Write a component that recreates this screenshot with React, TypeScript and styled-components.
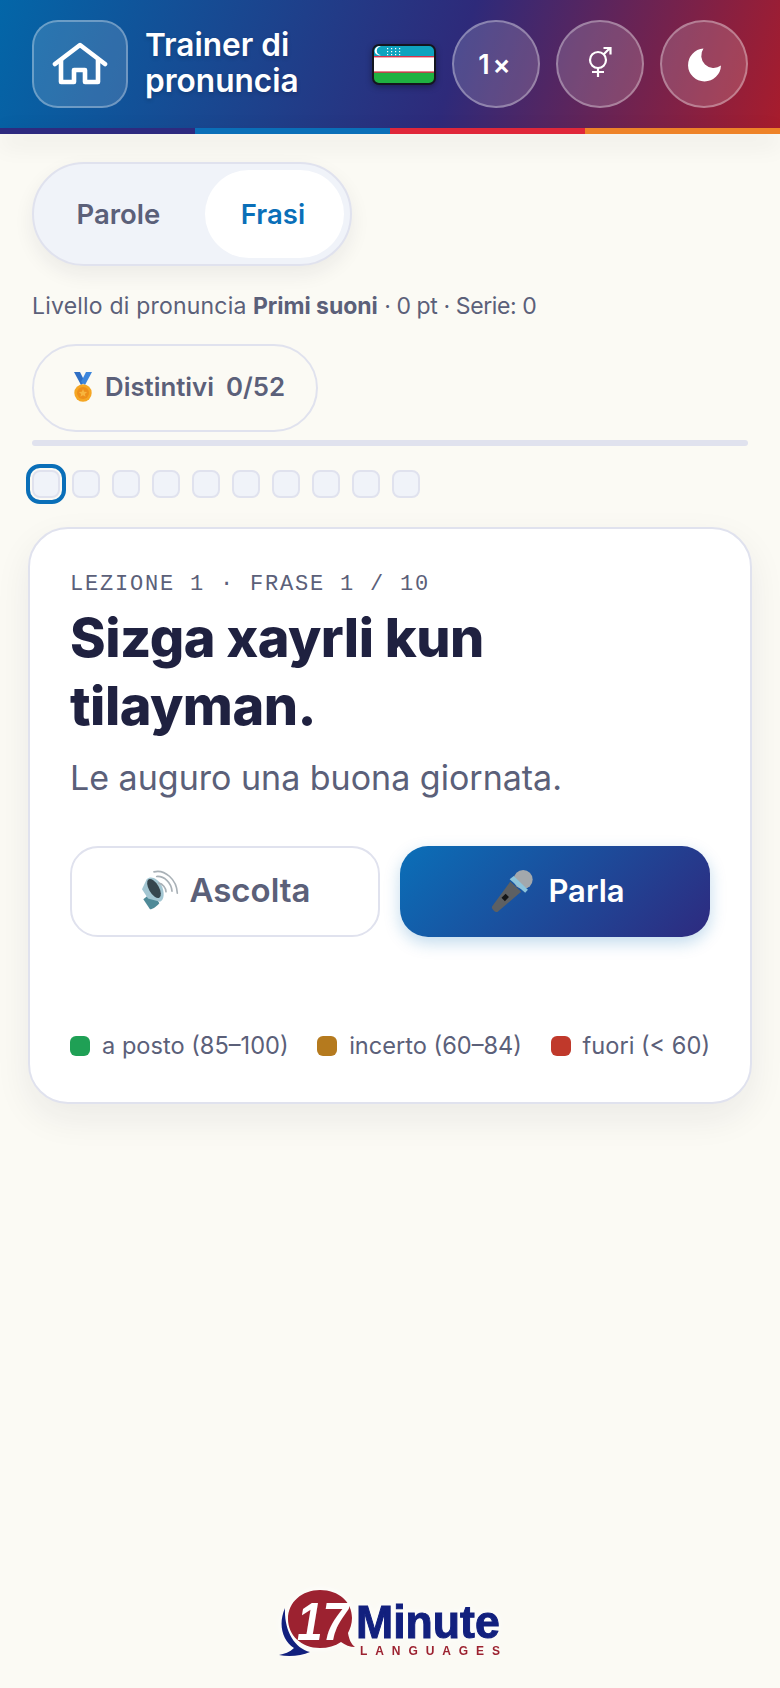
import React from 'react';
import styled, { createGlobalStyle } from 'styled-components';

const GlobalStyle = createGlobalStyle`
  html, body {
    margin: 0;
    padding: 0;
    background: #fbfaf4;
    font-family: Inter, "Noto Sans", sans-serif;
  }
  * { box-sizing: border-box; }
`;

const Page = styled.div`
  width: 780px;
  height: 1688px;
  display: flex;
  flex-direction: column;
  background: #fbfaf4;
  overflow: hidden;
`;

const TopBar = styled.header`
  height: 128px;
  padding: 0 32px;
  display: flex;
  align-items: center;
  background: linear-gradient(108deg, #0366a8 0%, #2e2a7a 58%, #a81c2c 100%);
`;

const HomeButton = styled.button`
  width: 96px;
  height: 88px;
  flex-shrink: 0;
  display: flex;
  align-items: center;
  justify-content: center;
  padding: 0;
  border-radius: 26px;
  border: 2px solid rgba(255, 255, 255, 0.3);
  background: rgba(255, 255, 255, 0.14);
`;

const Title = styled.h1`
  margin: -2px 0 0 17px;
  flex: 1;
  font-size: 31.6px;
  line-height: 36px;
  font-weight: 600;
  color: #fff;
  text-shadow: 0 2px 4px rgba(0, 0, 0, 0.2);
`;

const FlagWrap = styled.span`
  display: flex;
  margin-right: 16px;
  filter: drop-shadow(0 2px 3px rgba(0, 0, 0, 0.35));
`;

const RoundButton = styled.button`
  width: 88px;
  height: 88px;
  flex-shrink: 0;
  display: flex;
  align-items: center;
  justify-content: center;
  padding: 0;
  border-radius: 50%;
  border: 2px solid rgba(255, 255, 255, 0.32);
  background: rgba(255, 255, 255, 0.16);
  color: #fff;
  font-family: inherit;
  font-size: 27px;
  font-weight: 600;
  letter-spacing: 3px;
  & + & { margin-left: 16px; }
`;

const Strip = styled.div`
  height: 6px;
  display: grid;
  grid-template-columns: repeat(4, 1fr);
  box-shadow: 0 8px 24px rgba(20, 20, 30, 0.14);
`;

const StripPart = styled.span<{ $color: string }>`
  background: ${(p) => p.$color};
`;

const Content = styled.main`
  flex: 1;
  padding: 28px 32px 0;
  display: flex;
  flex-direction: column;
  align-items: flex-start;
`;

const Toggle = styled.div`
  display: inline-flex;
  gap: 8px;
  padding: 6px;
  border-radius: 999px;
  border: 2px solid #e0e2ee;
  background: #f0f3f9;
  box-shadow: 0 8px 20px rgba(30, 30, 60, 0.07);
`;

const ToggleOption = styled.button<{ $active?: boolean }>`
  height: 88px;
  padding: ${(p) => (p.$active ? '0 39px 0 36px' : '0 36.500px')};
  border: 0;
  border-radius: 999px;
  font-family: inherit;
  font-size: 27.5px;
  font-weight: 600;
  color: ${(p) => (p.$active ? '#0a6fb8' : '#5b6079')};
  background: ${(p) => (p.$active ? '#fff' : 'transparent')};
`;

const LevelLine = styled.p`
  margin: 22px 0 0;
  font-size: 23px;
  line-height: 36px;
  color: #5b6079;
  b { font-weight: 700; letter-spacing: -0.05px; }
`;

const LevelLabel = styled.span`
  letter-spacing: 0.2px;
`;

const LevelStats = styled.span`
  letter-spacing: -0.4px;
`;

const BadgePill = styled.button`
  margin-top: 20px;
  width: 286px;
  height: 88px;
  display: flex;
  align-items: center;
  gap: 12px;
  padding: 0 0 3px 39px;
  border-radius: 999px;
  border: 2px solid #e0e2ee;
  background: transparent;
  color: #5b6079;
  font-family: inherit;
  font-size: 25.8px;
  font-weight: 600;
`;

const ProgressBar = styled.div`
  margin-top: 8px;
  width: 100%;
  height: 6px;
  border-radius: 3px;
  background: #e0e2ee;
`;

const Dots = styled.div`
  margin-top: 24px;
  display: flex;
  gap: 12px;
`;

const Dot = styled.span<{ $current?: boolean }>`
  width: 28px;
  height: 28px;
  border-radius: 8px;
  border: 2px solid #e0e2ee;
  background: #f0f3f9;
  ${(p) => p.$current && 'outline: 4px solid #0a6fb8; outline-offset: 2px;'}
`;

const Card = styled.section`
  margin: 29px -4px 0;
  align-self: stretch;
  height: 577px;
  padding: 42px 40px 0;
  border-radius: 40px;
  border: 2px solid #e0e2ee;
  background: #fff;
  box-shadow: 0 14px 36px rgba(30, 30, 60, 0.07);
`;

const Eyebrow = styled.div`
  font-family: "Liberation Mono", monospace;
  font-size: 22px;
  letter-spacing: 1.8px;
  line-height: 28px;
  color: #5b6079;
`;

const Phrase = styled.h2`
  margin: 5px 0 0;
  font-size: 54px;
  line-height: 68px;
  font-weight: 800;
  letter-spacing: -0.5px;
  color: #1f2140;
`;

const Translation = styled.p`
  margin: 16px 0 0;
  font-size: 34px;
  line-height: 44px;
  color: #5b6079;
`;

const Actions = styled.div`
  margin-top: 46px;
  display: grid;
  grid-template-columns: 1fr 1fr;
  gap: 20px;
`;

const ActionButton = styled.button<{ $primary?: boolean }>`
  height: 91px;
  display: flex;
  align-items: center;
  justify-content: center;
  gap: ${(p) => (p.$primary ? '14px' : '5px')};
  padding: ${(p) => (p.$primary ? '0 0 2px 5px' : '0 0 3px')};
  border-radius: 28px;
  font-family: inherit;
  font-size: ${(p) => (p.$primary ? '31px' : '33px')};
  font-weight: 600;
  color: ${(p) => (p.$primary ? '#fff' : '#5b6079')};
  border: ${(p) => (p.$primary ? '0' : '2px solid #e0e2ee')};
  background: ${(p) => (p.$primary ? 'linear-gradient(135deg, #0a6fb8, #2e2a7f)' : '#fff')};
  box-shadow: ${(p) => (p.$primary ? '0 6px 16px rgba(10, 111, 184, 0.25)' : 'none')};
`;

const Legend = styled.div`
  margin-top: 95px;
  display: flex;
  justify-content: space-between;
`;

const LegendItem = styled.span`
  display: flex;
  align-items: center;
  gap: 12px;
  font-size: 23.6px;
  line-height: 28px;
  color: #5b6079;
`;

const LegendSwatch = styled.i<{ $color: string }>`
  width: 20px;
  height: 20px;
  border-radius: 6px;
  background: ${(p) => p.$color};
`;

const Footer = styled.footer`
  margin-top: auto;
  align-self: stretch;
  padding-bottom: 26px;
  display: flex;
  justify-content: center;
  filter: drop-shadow(0 0 4px #fff);
`;

const HomeIcon = () => (
  <svg width="56" height="46" viewBox="0 0 56 46" fill="none" stroke="#fff" strokeWidth="4.6" strokeLinejoin="round" strokeLinecap="round">
    <path d="M3 23 28 4l25 19" />
    <path d="M9 19v22h13V29h11v12h13V19" />
  </svg>
);

const UzFlag = () => (
  <svg width="64" height="41" viewBox="0 0 64 41">
    <defs>
      <clipPath id="flag-clip">
        <rect x="1" y="1" width="62" height="39" rx="6" />
      </clipPath>
    </defs>
    <g clipPath="url(#flag-clip)">
      <rect width="64" height="13" fill="#0fa3bf" />
      <rect y="13" width="64" height="15" fill="#fff" />
      <rect y="28" width="64" height="13" fill="#1fb141" />
      <rect y="12" width="64" height="1.4" fill="#d8324a" />
      <rect y="27.4" width="64" height="1.4" fill="#d8324a" />
      <path d="M9 2.500a4.600 4.600 0 1 0 0 8.500 4 4 0 1 1 0-8.500z" fill="#fff" />
      {[15, 19, 23, 27].map((x) =>
        [4, 7, 10].map((y) => <rect key={`${x}-${y}`} x={x} y={y} width="1.2" height="1.2" fill="#fff" />),
      )}
    </g>
    <rect x="1" y="1" width="62" height="39" rx="6" fill="none" stroke="#14161f" strokeWidth="2" />
  </svg>
);

const GenderIcon = () => (
  <svg width="36" height="38" viewBox="0 0 36 38" fill="none" stroke="#fff" strokeWidth="2.2">
    <circle cx="16" cy="15" r="8" />
    <path d="M16 23v9M10 27h12M21.500 9.500 28 3M21.500 3H28.500V9.500" />
  </svg>
);

const MoonIcon = () => (
  <svg width="35" height="35" viewBox="0 0 34 34">
    <path d="M16 1.500A16 16 0 1 0 33 18 12 12 0 0 1 16 1.500z" fill="#fff" />
  </svg>
);

const MedalIcon = () => (
  <svg width="20" height="30" viewBox="0 0 20 30">
    <path d="M1 0h6l5 10-4 3z" fill="#2f6fc4" />
    <path d="M19 0h-6l-5 10 4 3z" fill="#3d86dc" />
    <circle cx="10" cy="21" r="8.700" fill="#f5a623" />
    <circle cx="10" cy="21" r="6" fill="#ee8f1a" />
    <path d="m10 17 1.200 2.700 2.900.3-2.200 1.900.7 2.900-2.600-1.500-2.600 1.500.7-2.900L5.900 20l2.900-.3z" fill="#f7b53e" />
  </svg>
);

// Loudspeaker, drawn on a 180-unit grid
const SpeakerIcon = () => (
  <svg width="45" height="42" viewBox="35 30 135 125" fill="none">
    <path d="M48 120 68 150c8 0 20-8 28-18l-20-34z" fill="#4f8a98" />
    <path d="M44 90 58 60c14-12 34 0 44 18s10 44-4 50L62 118z" fill="#a3c6d2" />
    <ellipse cx="80" cy="88" rx="15" ry="32" transform="rotate(-30 80 88)" fill="#36464e" />
    <path d="M94 72c12 2 22 14 22 26M88 52c22-2 44 18 46 44M80 38c32-8 68 22 70 64" stroke="#a9b1b7" strokeWidth="5" strokeLinecap="round" />
  </svg>
);

// Hand microphone, same grid as the loudspeaker
const MicIcon = () => (
  <svg width="44" height="44" viewBox="30 25 130 130">
    <path d="M90 62 122 92 52 152c-6 2-18-8-16-16z" fill="#5d6063" />
    <circle cx="128" cy="56" r="28" fill="#a3a8ac" />
    <path d="M104 38 146 78l-8 9-46-40z" fill="#8cc4dc" transform="translate(-4 8)" />
    <path d="m76 98 10 10-12 12-10-10z" fill="#141618" />
  </svg>
);

const Logo = () => (
  <svg width="230" height="80" viewBox="-3 0 230 80">
    <path d="M7 26C0 42 4 58 16 66c-4 4-10 6-15 7 10 2 22 1 31-3C16 66 6 48 7 26z" fill="#12207e" />
    <path d="M42 8c19 0 32 12 32 28 0 6-2 11-4 15 1 6 3 11 7 14-5 0-10-2-14-5-6 4-13 6-21 6C23 66 10 53 10 37 10 20 24 8 42 8z" fill="#9c2230" />
    <text x="19" y="58" fill="#fff" fontFamily="Liberation Sans, sans-serif" fontSize="53" fontWeight="700" fontStyle="italic" textLength="51" lengthAdjust="spacingAndGlyphs">17</text>
    <text transform="translate(78 56) scale(.97 1)" fill="#12207e" fontFamily="Liberation Sans, sans-serif" fontSize="46" fontWeight="700" stroke="#12207e" strokeWidth="1">Minute</text>
    <text x="82" y="73" fill="#9c2230" fontFamily="Liberation Sans, sans-serif" fontSize="12" fontWeight="700" textLength="140">LANGUAGES</text>
  </svg>
);

const stripColors = ['#2e2a7f', '#0a6fb8', '#e0273a', '#ee8328'];

const App: React.FC = () => {
  return (
    <Page>
      <GlobalStyle />
      <TopBar>
        <HomeButton aria-label="Home">
          <HomeIcon />
        </HomeButton>
        <Title>
          Trainer di
          <br />
          pronuncia
        </Title>
        <FlagWrap>
          <UzFlag />
        </FlagWrap>
        <RoundButton>1×</RoundButton>
        <RoundButton aria-label="Voce">
          <GenderIcon />
        </RoundButton>
        <RoundButton aria-label="Tema">
          <MoonIcon />
        </RoundButton>
      </TopBar>
      <Strip>
        {stripColors.map((c) => (
          <StripPart key={c} $color={c} />
        ))}
      </Strip>
      <Content>
        <Toggle>
          <ToggleOption>Parole</ToggleOption>
          <ToggleOption $active>Frasi</ToggleOption>
        </Toggle>
        <LevelLine>
          <LevelLabel>Livello di pronuncia</LevelLabel> <b>Primi suoni</b>{' '}
          <LevelStats>· 0 pt · Serie: 0</LevelStats>
        </LevelLine>
        <BadgePill>
          <MedalIcon />
          <span>Distintivi</span>
          <span>0/52</span>
        </BadgePill>
        <ProgressBar />
        <Dots>
          {Array.from({ length: 10 }, (_, i) => (
            <Dot key={i} $current={i === 0} />
          ))}
        </Dots>
        <Card>
          <Eyebrow>LEZIONE 1 · FRASE 1 / 10</Eyebrow>
          <Phrase>Sizga xayrli kun tilayman.</Phrase>
          <Translation>Le auguro una buona giornata.</Translation>
          <Actions>
            <ActionButton>
              <SpeakerIcon />
              Ascolta
            </ActionButton>
            <ActionButton $primary>
              <MicIcon />
              Parla
            </ActionButton>
          </Actions>
          <Legend>
            <LegendItem>
              <LegendSwatch $color="#1fa055" />a posto (85–100)
            </LegendItem>
            <LegendItem>
              <LegendSwatch $color="#b57a1e" />incerto (60–84)
            </LegendItem>
            <LegendItem>
              <LegendSwatch $color="#c0392b" />fuori (&lt; 60)
            </LegendItem>
          </Legend>
        </Card>
        <Footer>
          <Logo />
        </Footer>
      </Content>
    </Page>
  );
};

export default App;
